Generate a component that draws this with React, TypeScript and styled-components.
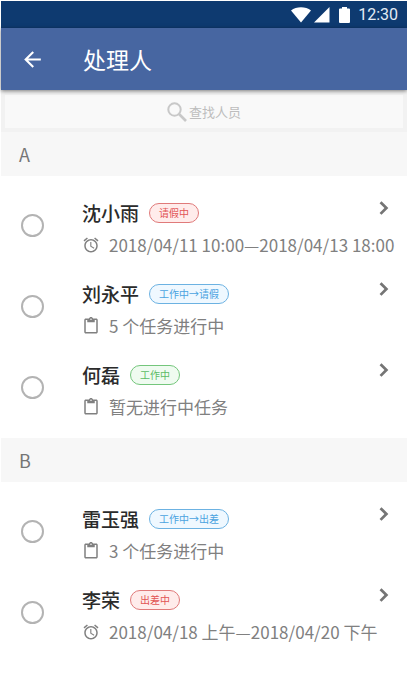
import React from "react";
import styled, { createGlobalStyle } from "styled-components";

type Tone = "red" | "blue" | "green";
type DetailKind = "time" | "task";

interface Person {
  id: string;
  name: string;
  status: string;
  tone: Tone;
  kind: DetailKind;
  detail: string;
}

interface Group {
  letter: string;
  people: Person[];
}

const groups: Group[] = [
  {
    letter: "A",
    people: [
      { id: "shen", name: "沈小雨", status: "请假中", tone: "red", kind: "time", detail: "2018/04/11 10:00—2018/04/13 18:00" },
      { id: "liu", name: "刘永平", status: "工作中→请假", tone: "blue", kind: "task", detail: "5 个任务进行中" },
      { id: "he", name: "何磊", status: "工作中", tone: "green", kind: "task", detail: "暂无进行中任务" },
    ],
  },
  {
    letter: "B",
    people: [
      { id: "lei", name: "雷玉强", status: "工作中→出差", tone: "blue", kind: "task", detail: "3 个任务进行中" },
      { id: "li", name: "李荣", status: "出差中", tone: "red", kind: "time", detail: "2018/04/18 上午—2018/04/20 下午" },
    ],
  },
];

const tones: Record<Tone, { line: string; text: string; fill: string }> = {
  red: { line: "#e07a7a", text: "#e25555", fill: "#ffeceb" },
  blue: { line: "#6cb2e2", text: "#4ba3df", fill: "#eff8ff" },
  green: { line: "#74c67c", text: "#5dbb66", fill: "#effbf0" },
};

const GlobalStyle = createGlobalStyle`
  *, *::before, *::after { box-sizing: border-box; }
  body {
    margin: 0;
    background: #fff;
    font-family: "Noto Sans CJK SC", "Noto Sans", sans-serif;
  }
  button, input { font-family: inherit; }
`;

const Screen = styled.div`
  padding: 1px 0 0 1px;
`;

const StatusBar = styled.div`
  display: flex;
  align-items: center;
  justify-content: flex-end;
  height: 27px;
  padding-right: 9px;
  background: #0e3a70;
  color: #e3eaf4;
  font: 400 16px/27px Roboto, sans-serif;

  svg { display: block; fill: #fff; }
  time { margin-left: 8px; }
`;

const SignalIcon = styled.svg`
  margin: 0 9px 0 3px;
`;

const AppBar = styled.header`
  position: relative;
  display: flex;
  align-items: center;
  height: 62px;
  padding-left: 19px;
  background: #4766a1;
  box-shadow: 0 1px 4px rgba(0, 0, 0, 0.5);
  color: #fff;
`;

const IconButton = styled.button`
  display: flex;
  padding: 0;
  border: 0;
  background: none;
  color: inherit;
  cursor: pointer;
`;

const Title = styled.h1`
  margin: 0 0 0 38px;
  font-size: 23px;
  font-weight: 400;
  line-height: 34px;
`;

const SearchBar = styled.div`
  padding: 5px 4px 4px;
  background: #f2f2f2;
`;

const SearchField = styled.label`
  display: flex;
  align-items: center;
  justify-content: center;
  gap: 2px;
  height: 33px;
  padding-top: 1px;
  background: #f9f9f9;
  color: #c8c8c8;
`;

const SearchInput = styled.input`
  field-sizing: content;
  max-width: 70%;
  padding: 0;
  border: 0;
  outline: 0;
  background: none;
  color: #757575;
  font-size: 13px;
  line-height: 20px;

  &::placeholder { color: #bdbdbd; opacity: 1; }
`;

const GroupTitle = styled.h2`
  margin: 0;
  padding: 0 18px;
  background: #f7f7f7;
  color: #757575;
  font-size: 18px;
  font-weight: 400;
  line-height: 44px;
`;

const PeopleList = styled.ul`
  margin: 0;
  padding: 9px 0 10px;
  list-style: none;
`;

const PersonRow = styled.li`
  display: flex;
  align-items: center;
  height: 81px;
  padding-left: 20px;
`;

const Radio = styled.input`
  flex: none;
  width: 23px;
  height: 23px;
  margin: 0 38px 0 0;
  border: 2px solid #b3b3b3;
  border-radius: 50%;
  appearance: none;
  background: #fff;
  cursor: pointer;

  &:checked { border-color: #4766a1; background: #4766a1; box-shadow: inset 0 0 0 4px #fff; }
`;

const Info = styled.div`
  flex: 1;
  min-width: 0;
  padding-top: 6px;
`;

const Line = styled.div`
  display: flex;
  align-items: center;
  height: 32px;
`;

const Name = styled.label`
  margin: 0 10px 0 0;
  color: #2b2b2b;
  font-size: 19px;
  font-weight: 500;
  line-height: 28px;
  cursor: pointer;
`;

const Badge = styled.span<{ $tone: Tone }>`
  padding: 0 9px;
  border: 1px solid ${(p) => tones[p.$tone].line};
  border-radius: 10px;
  background: ${(p) => tones[p.$tone].fill};
  color: ${(p) => tones[p.$tone].text};
  font-size: 10px;
  line-height: 18px;
`;

const MoreButton = styled(IconButton)`
  margin: 0 10px 10px auto;
  color: #757575;
`;

const Detail = styled(Line)`
  gap: 9px;
  color: #808080;
  font-size: 17px;
  line-height: 24px;
  white-space: nowrap;

  svg { flex: none; }
`;

const ClockIcon = () => (
  <svg width="18" height="18" viewBox="0 0 24 24" fill="currentColor" aria-hidden="true">
    <path d="M22 5.72l-4.6-3.86-1.29 1.53 4.6 3.86L22 5.72zM7.88 3.39L6.6 1.86 2 5.71l1.29 1.53 4.59-3.85zM12.5 8H11v6l4.75 2.85.75-1.23-4-2.37V8zM12 4c-4.97 0-9 4.03-9 9s4.02 9 9 9c4.97 0 9-4.03 9-9s-4.03-9-9-9zm0 16c-3.87 0-7-3.13-7-7s3.13-7 7-7 7 3.13 7 7-3.13 7-7 7z" />
  </svg>
);

const ClipboardIcon = () => (
  <svg width="18" height="18" viewBox="0 0 24 24" fill="currentColor" aria-hidden="true">
    <path d="M19 2h-4.18C14.4.84 13.3 0 12 0c-1.3 0-2.4.84-2.82 2H5c-1.1 0-2 .9-2 2v16c0 1.1.9 2 2 2h14c1.1 0 2-.9 2-2V4c0-1.1-.9-2-2-2zm-7 0c.55 0 1 .45 1 1s-.45 1-1 1-1-.45-1-1 .45-1 1-1zm7 18H5V4h2v3h10V4h2v16z" />
  </svg>
);

export default function App() {
  return (
    <Screen>
      <GlobalStyle />
      <StatusBar>
        <svg width="20" height="16" viewBox="0 0 20 16" aria-hidden="true">
          <path d="M10 15.5L0 3.6C2.8 1.4 6.200 .3 10 .3s7.200 1.100 10 3.300z" />
        </svg>
        <SignalIcon width="16" height="16" viewBox="0 0 16 16" aria-hidden="true">
          <path d="M15.500 0v15.500H0z" />
        </SignalIcon>
        <svg width="11" height="16" viewBox="0 0 11 16" aria-hidden="true">
          <path d="M3 0h5v1.500h2q1 0 1 1V15q0 1-1 1H1q-1 0-1-1V2.500q0-1 1-1h2z" />
        </svg>
        <time>12:30</time>
      </StatusBar>
      <AppBar>
        <IconButton type="button" aria-label="返回">
          <svg width="25" height="25" viewBox="0 0 24 24" fill="currentColor" aria-hidden="true">
            <path d="M20 11H7.830l5.590-5.590L12 4l-8 8 8 8 1.410-1.410L7.830 13H20v-2z" />
          </svg>
        </IconButton>
        <Title>处理人</Title>
      </AppBar>
      <main>
        <SearchBar>
          <SearchField>
            <svg width="20" height="20" viewBox="0 0 20 20" fill="none" stroke="currentColor" aria-hidden="true">
              <circle cx="7.500" cy="7.500" r="6.200" strokeWidth="2" />
              <path d="M12 12l7 7" strokeWidth="2.600" />
            </svg>
            <SearchInput type="text" placeholder="查找人员" aria-label="查找人员" />
          </SearchField>
        </SearchBar>
        {groups.map((group) => (
          <section key={group.letter}>
            <GroupTitle>{group.letter}</GroupTitle>
            <PeopleList>
              {group.people.map((person) => (
                <PersonRow key={person.id}>
                  <Radio type="radio" name="handler" id={person.id} />
                  <Info>
                    <Line>
                      <Name htmlFor={person.id}>{person.name}</Name>
                      <Badge $tone={person.tone}>{person.status}</Badge>
                      <MoreButton type="button" aria-label={`查看${person.name}`}>
                        <svg width="26" height="26" viewBox="0 0 24 24" fill="currentColor" aria-hidden="true">
                          <path d="M9.700 5.700L7.900 7.500 12.400 12l-4.500 4.500 1.800 1.800L16 12z" />
                        </svg>
                      </MoreButton>
                    </Line>
                    <Detail>
                      {person.kind === "time" ? <ClockIcon /> : <ClipboardIcon />}
                      <span>{person.detail}</span>
                    </Detail>
                  </Info>
                </PersonRow>
              ))}
            </PeopleList>
          </section>
        ))}
      </main>
    </Screen>
  );
}
